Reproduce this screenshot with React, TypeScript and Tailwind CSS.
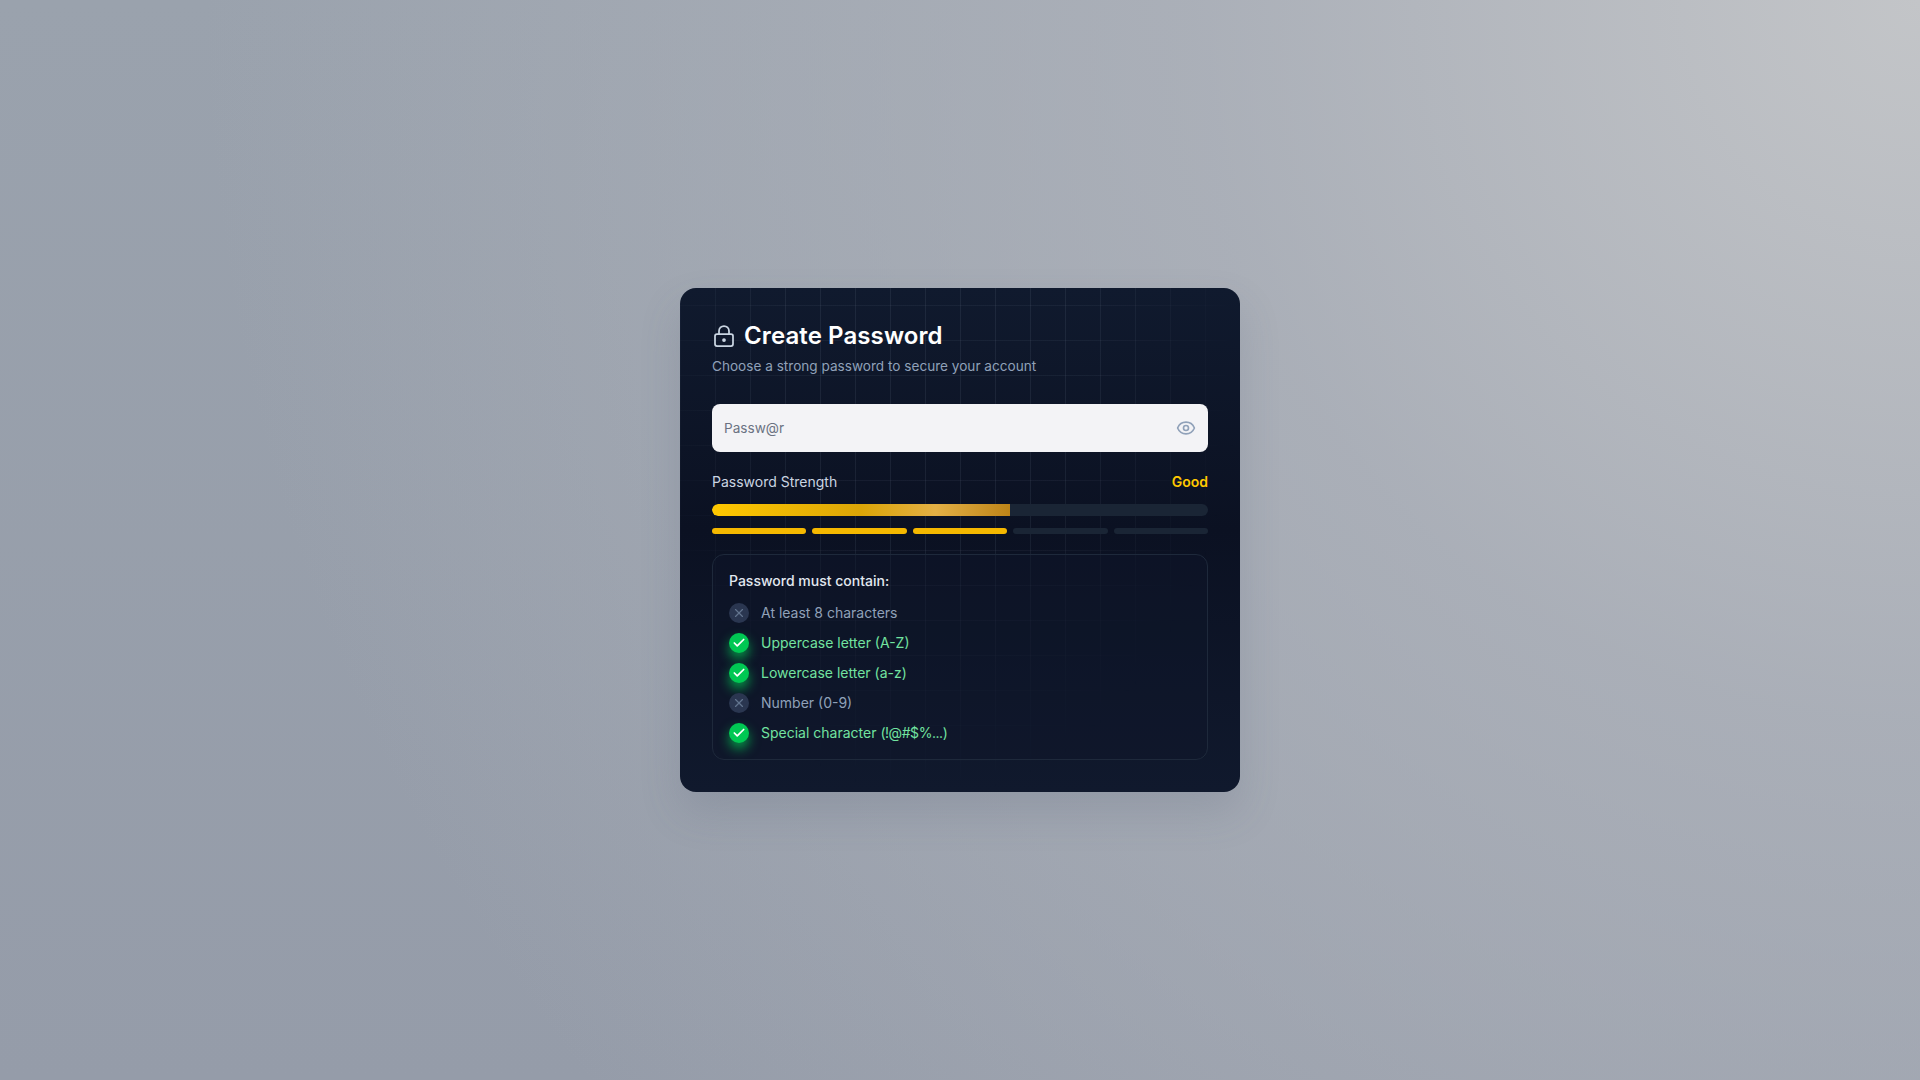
import type { ReactNode } from 'react';
import { Check, Eye, LockKeyhole, X } from 'lucide-react';

const RULES: { id: string; label: ReactNode; met: boolean }[] = [
  { id: 'length', label: 'At least 8 characters', met: false },
  { id: 'upper', label: 'Uppercase letter (A-Z)', met: true },
  { id: 'lower', label: 'Lowercase letter (a-z)', met: true },
  { id: 'number', label: 'Number (0-9)', met: false },
  {
    id: 'special',
    label: (
      <>
        Special character <span className="tracking-[-0.45px]">(!@#$%...)</span>
      </>
    ),
    met: true,
  },
];

const SEGMENTS = [true, true, true, false, false];

export default function App() {
  return (
    <div className="relative flex min-h-screen items-center justify-center overflow-hidden bg-[linear-gradient(180deg,#9aa2ad_0%,#959ca9_100%)] font-['Inter',sans-serif] antialiased">
      <div className="absolute inset-0 bg-[radial-gradient(circle_at_100%_0%,#c3c5c8_0%,rgba(176,180,188,0.75)_33%,rgba(160,166,176,0)_78%)]" />
      <div className="relative w-[560px] overflow-hidden rounded-2xl bg-[linear-gradient(180deg,#101a2e_0%,#0b1122_48%,#10192d_100%)] p-8 shadow-[0_20px_40px_rgba(80,90,110,0.18)]">
        <div className="absolute inset-0 bg-[linear-gradient(rgba(148,163,184,0.08)_1px,transparent_1px),linear-gradient(90deg,rgba(148,163,184,0.11)_1px,transparent_1px)] bg-[length:35px_35px] bg-[position:0_17px] [mask-image:radial-gradient(ellipse_at_45%_10%,black_35%,transparent_72%)]" />
        <div className="relative">
          <div className="flex items-center gap-2">
            <LockKeyhole className="h-6 w-6 text-slate-300" strokeWidth={1.75} />
            <h1 className="text-2xl leading-8 font-semibold tracking-[0.1px] text-white">Create Password</h1>
          </div>
          <p className="mt-1 text-[13.6px] leading-5 text-slate-400">Choose a strong password to secure your account</p>

          <div className="mt-7 flex h-12 items-center justify-between rounded-lg bg-[#f3f3f6] px-3">
            <span className="text-[13.6px] text-gray-500">Passw@r</span>
            <Eye className="h-5 w-5 text-slate-400" />
          </div>

          <div className="mt-5 flex items-center justify-between text-sm leading-5">
            <span className="text-slate-300">Password Strength</span>
            <span className="font-semibold text-[#ffc800]">Good</span>
          </div>

          <div className="mt-3 h-3 overflow-hidden rounded-full bg-[#1a2535]">
            <div className="h-full w-[60%] rounded-l-full bg-[linear-gradient(90deg,#ffc800_0%,#dba507_50%,#e3b045_75%,#bd8418_100%)]" />
          </div>

          <div className="mt-3 grid grid-cols-5 gap-1.5">
            {SEGMENTS.map((on, i) => (
              <div key={i} className={on ? 'h-1.5 rounded-full bg-[#f5b800]' : 'h-1.5 rounded-full bg-[#1a2535]'} />
            ))}
          </div>

          <div className="mt-5 rounded-xl border border-[#1e293b] bg-[#0f172a]/40 p-4">
            <p className="mb-3 text-sm leading-5 font-medium text-slate-200">Password must contain:</p>
            <ul className="space-y-2.5">
              {RULES.map((rule) => (
                <li key={rule.id} className="flex h-5 items-center gap-3">
                  {rule.met ? (
                    <span className="flex h-5 w-5 items-center justify-center rounded-full bg-[#00c853] shadow-[0_6px_12px_rgba(0,200,83,0.75)]">
                      <Check className="h-3.5 w-3.5 text-white" strokeWidth={3} />
                    </span>
                  ) : (
                    <span className="flex h-5 w-5 items-center justify-center rounded-full bg-[#2a3650]">
                      <X className="h-3.5 w-3.5 text-slate-500" />
                    </span>
                  )}
                  <span className={rule.met ? 'text-sm text-[#72e3a0]' : 'text-sm text-slate-400'}>{rule.label}</span>
                </li>
              ))}
            </ul>
          </div>
        </div>
      </div>
    </div>
  );
}
